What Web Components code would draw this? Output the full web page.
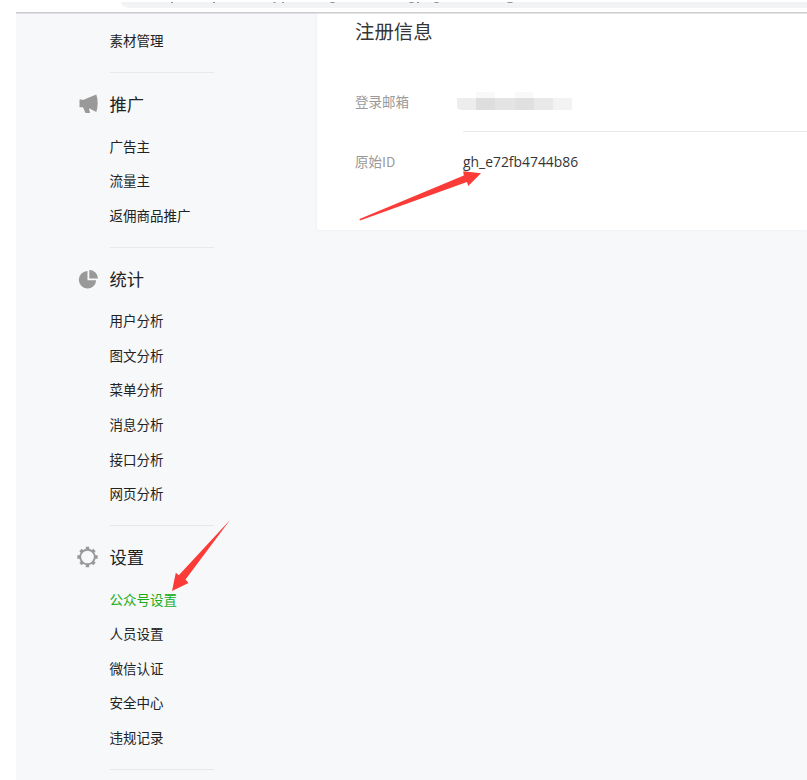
<!DOCTYPE html>
<html lang="zh-CN"><head><meta charset="utf-8"><title>公众号设置</title>
<style>
html,body{margin:0;background:#fff}
body{width:807px;height:780px;overflow:hidden;font-family:"Noto Sans CJK SC",sans-serif;font-size:13.5px;color:#353535}
</style></head><body>
<settings-page></settings-page>
<script>
const define=(name,html,init)=>customElements.define(name,class extends HTMLElement{
  connectedCallback(){
    if(this.shadowRoot)return;
    const t=document.createElement('template');t.innerHTML=html;
    this.attachShadow({mode:'open'}).append(t.content.cloneNode(true));
    if(init)init(this,this.shadowRoot);
  }
});
const icons={
 promo:'<path fill="#999" d="M2.500 6.500h2l1.500.6L19.300 1.500q2.800 8.500 0 17.500L12 15.200l1 4.800H8.500L6 14.200H2.500z"/>',
 stats:'<path fill="#999" d="M10.500 3v9.200h8.700a8.700 8.700 0 1 1-8.700-9.200z"/><path fill="#999" d="M12.300 2a8.700 8.700 0 0 1 8.700 8.500h-8.700z"/>',
 gear:'<circle cx="10.500" cy="11" r="7.300" fill="none" stroke="#999" stroke-width="1.9"/><path stroke="#999" stroke-width="3.400" d="M10.500 .8v3M10.500 18.200v3M.3 11h3M17.700 11h3M3.500 4l2 2M15.500 16l2 2M3.500 18l2-2M15.500 6l2-2"/>'
};
define('browser-edge',`<style>
:host{display:block;height:12px;padding-top:2px;box-sizing:border-box;background:#fff}
div{margin-left:121px;height:6px;background:#f1f3f4;border-bottom-left-radius:9px 6px}
svg{display:block}</style>
<div><svg width="686" height="6"><path stroke="#73777a" stroke-opacity=".75" d="M50 .5h2M92 .5h2M152.500 .5h2M161 .5h2M209.500 .5h4M288.500 .5h4M296 .5h2M313.500 .5h4M386.500 .5h5"/></svg></div>`);
define('nav-item',`<style>
:host{display:flex;align-items:center;height:34.58px;padding-bottom:1px;box-sizing:border-box;color:#222;white-space:nowrap}
:host([active]){color:#1aad19}</style><slot></slot>`);
define('nav-group',`<style>
:host{display:block;width:104px}
header{display:flex;align-items:center;height:34.58px;margin:13.9px 0 7.1px -33px;font-size:17.3px;color:#222}
svg{width:22px;height:22px;margin-right:11px;flex:none;overflow:visible}
span{padding-bottom:1px}
hr{border:0;height:1px;margin:14.35px 0 0;background:#e7e8eb}
</style><header></header><slot></slot><hr>`,(el,r)=>{
  const h=r.querySelector('header');
  if(el.getAttribute('label'))h.innerHTML='<svg viewBox="0 0 22 22">'+icons[el.getAttribute('icon')]+'</svg><span>'+el.getAttribute('label')+'</span>';
  else h.remove();
});
define('side-nav',`<style>
:host{display:block;width:207.5px;padding:9.3px 0 0 93.5px;box-sizing:content-box}
</style><slot></slot>`);
define('info-row',`<style>
:host{display:flex;height:60px;align-items:center}
.label{width:108px;color:#9a9a9a;white-space:nowrap}
.value{flex:1;height:100%;box-sizing:border-box;display:flex;align-items:center;color:#353535;font-family:"Open Sans","Noto Sans CJK SC",sans-serif;font-size:13.9px}
:host([line]){height:61px;margin:-1px 0}
:host([line]) .label{padding-bottom:1px}
:host([line]) .value{border-bottom:1px solid #e7e8eb}
</style><span class="label"><slot name="label"></slot></span><div class="value"><slot></slot></div>`);
define('masked-text',`<style>:host{display:block;width:115px;height:19px;margin-left:-6px}svg{display:block}</style>
<svg width="115" height="19" shape-rendering="crispEdges"><path fill="#ededee" d="M0 6h19v12H4l-4-2z"/><path fill="#dedede" d="M19 6h19v12H19z"/><path fill="#e4e4e5" d="M38 6h20v12H38z"/><path fill="#e0e0e1" d="M58 6h19v12H58z"/><path fill="#e9e9e9" d="M77 6h19v12H77z"/><path fill="#f3f3f3" d="M96 6h19v12H96z"/><path fill="#f9f9f9" d="M19 0h19v6H19zM58 0h18v6H58z"/></svg>`);
define('info-card',`<style>
:host{display:block;flex:1;height:216px;padding-left:38px;box-sizing:border-box;background:#fff;box-shadow:0 0 3px #e9ecef;border-bottom-left-radius:2px}
h2{margin:0;font-size:19.4px;line-height:34px;font-weight:400;color:#353535}
.rows{padding-top:24px}
</style><h2><slot name="title"></slot></h2><div class="rows"><slot></slot></div>`);
define('pointer-arrows',`<style>:host{position:absolute;inset:0;pointer-events:none}svg{display:block}</style>
<svg width="807" height="780" fill="#fb3b38"><path d="M359.500 219L463.800 175.500L463.200 171.300L481 173.300L468.200 186L467 182L360 220.500z"/><path d="M230 520L178.800 575.200L175.800 572.800L172 591L188.500 583L185.500 579.500z"/></svg>`);
define('settings-page',`<style>
:host{display:block;position:relative;width:807px;height:780px;overflow:hidden}
main{margin-left:16px;height:768px;background:#f6f8fa;border-top:1px solid #c9c9cb;box-sizing:border-box}
.cols{display:flex;align-items:flex-start;border-top:1px solid #e0e0e2}
</style><browser-edge></browser-edge>
<main><div class="cols"><side-nav>
<nav-group><nav-item>素材管理</nav-item></nav-group>
<nav-group label="推广" icon="promo"><nav-item>广告主</nav-item><nav-item>流量主</nav-item><nav-item>返佣商品推广</nav-item></nav-group>
<nav-group label="统计" icon="stats"><nav-item>用户分析</nav-item><nav-item>图文分析</nav-item><nav-item>菜单分析</nav-item><nav-item>消息分析</nav-item><nav-item>接口分析</nav-item><nav-item>网页分析</nav-item></nav-group>
<nav-group label="设置" icon="gear"><nav-item active>公众号设置</nav-item><nav-item>人员设置</nav-item><nav-item>微信认证</nav-item><nav-item>安全中心</nav-item><nav-item>违规记录</nav-item></nav-group>
</side-nav><info-card><span slot="title">注册信息</span>
<info-row line><span slot="label">登录邮箱</span><masked-text></masked-text></info-row>
<info-row><span slot="label">原始ID</span>gh_e72fb4744b86</info-row>
</info-card></div></main><pointer-arrows></pointer-arrows>`);
</script></body></html>
